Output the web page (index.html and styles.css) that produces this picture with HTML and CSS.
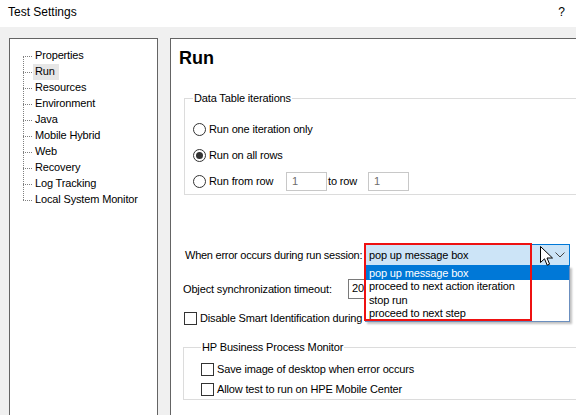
FILE: index.html
```html
<!DOCTYPE html>
<html>
<head>
<meta charset="utf-8">
<link rel="stylesheet" href="styles.css">
</head>
<body>
<div class="titlebar">
  <span class="title">Test Settings</span>
  <span class="help">?</span>
</div>
<div class="main">
  <div class="tree-panel">
    <ul class="tree">
      <li><span>Properties</span></li>
      <li><span class="sel">Run</span></li>
      <li><span>Resources</span></li>
      <li><span>Environment</span></li>
      <li><span>Java</span></li>
      <li><span>Mobile Hybrid</span></li>
      <li><span>Web</span></li>
      <li><span>Recovery</span></li>
      <li><span>Log Tracking</span></li>
      <li><span>Local System Monitor</span></li>
    </ul>
  </div>
  <div class="content-panel">
    <h1 class="heading">Run</h1>
    <fieldset class="group group-iter">
      <legend>Data Table iterations</legend>
      <div class="radio-row"><span class="radio"></span><span>Run one iteration only</span></div>
      <div class="radio-row"><span class="radio checked"></span><span>Run on all rows</span></div>
      <div class="radio-row">
        <span class="radio"></span><span class="from-label">Run from row</span>
        <span class="field">1</span><span class="to-label">to row</span><span class="field">1</span>
      </div>
    </fieldset>

    <div class="error-row">
      <span class="error-label">When error occurs during run session:</span>
      <div class="combo-wrap">
        <div class="combo">
          <span>pop up message box</span>
          <svg class="chev" width="10" height="6" viewBox="0 0 10 6"><path d="M0.5 0.5 L5 5 L9.5 0.5" fill="none" stroke="#444" stroke-width="1"/></svg>
        </div>
        <ul class="droplist">
          <li class="hl">pop up message box</li>
          <li>proceed to next action iteration</li>
          <li>stop run</li>
          <li>proceed to next step</li>
        </ul>
        <div class="redbox"></div>
        <svg class="cursor" width="14" height="21" viewBox="0 0 14 21"><path d="M0.5 0.5 L0.5 16.5 L4.5 12.8 L7.2 19.2 L9.6 18.2 L7 12 L12.5 12 Z" fill="#fff" stroke="#000" stroke-width="1" stroke-linejoin="miter"/></svg>
      </div>
    </div>

    <div class="timeout-row">
      <span class="timeout-label">Object synchronization timeout:</span>
      <span class="field field-timeout">20</span>
    </div>

    <div class="check-row check-smart">
      <span class="check"></span><span>Disable Smart Identification during the run session</span>
    </div>

    <fieldset class="group group-bpm">
      <legend>HP Business Process Monitor</legend>
      <div class="check-row"><span class="check"></span><span>Save image of desktop when error occurs</span></div>
      <div class="check-row"><span class="check"></span><span>Allow test to run on HPE Mobile Center</span></div>
    </fieldset>
  </div>
</div>
</body>
</html>
```

FILE: styles.css
```css
html, body {
  margin: 0;
  padding: 0;
}
body {
  width: 576px;
  height: 415px;
  overflow: hidden;
  background: #f0f0f0;
  font-family: "Liberation Sans", Arial, sans-serif;
  font-size: 11px;
  letter-spacing: -0.15px;
  color: #000;
}
.titlebar {
  height: 27px;
  background: #fff;
  display: flex;
  align-items: center;
  justify-content: space-between;
  padding: 0 11px 3px 8px;
  box-sizing: border-box;
  font-size: 12px;
  letter-spacing: 0;
}
.main {
  display: flex;
  gap: 12px;
  padding: 11px 0 0 9px;
}
.tree-panel {
  width: 147px;
  height: 400px;
  flex: none;
  background: #fff;
  border: 1px solid #646464;
}
.tree {
  position: relative;
  list-style: none;
  margin: 9px 0 0 13px;
  padding: 0;
}
.tree::before {
  content: "";
  position: absolute;
  left: 0;
  top: 8px;
  bottom: 8px;
  border-left: 1px dotted #808080;
}
.tree li {
  height: 16px;
  display: flex;
  align-items: center;
}
.tree li::before {
  content: "";
  width: 9px;
  margin-right: 2px;
  border-top: 1px dotted #808080;
}
.tree li span {
  padding: 1px 1px 2px 1px;
  line-height: 13px;
}
.tree li span.sel {
  background: #e6e6e6;
  margin-left: -1px;
  padding-left: 2px;
  padding-right: 4px;
}
.content-panel {
  width: 430px;
  height: 400px;
  flex: none;
  background: #fff;
  border: 1px solid #646464;
  padding-left: 8px;
  box-sizing: border-box;
}
.heading {
  margin: 8px 0 0 0;
  font-size: 18px;
  font-weight: bold;
  line-height: 22px;
  letter-spacing: 0;
}
.group {
  border: 1px solid #dcdcdc;
  margin: 0;
  padding: 0 0 0 8px;
  min-width: 0;
}
.group legend {
  padding: 0 1px;
  line-height: 14px;
}
.group-iter {
  margin: 22px 0 0 5px;
  height: 104px;
  box-sizing: border-box;
  padding-top: 11px;
  padding-left: 8px;
}
.radio-row {
  height: 26px;
  display: flex;
  align-items: center;
}
.radio {
  width: 13px;
  height: 13px;
  border: 1px solid #333;
  border-radius: 50%;
  box-sizing: border-box;
  margin-right: 3px;
  display: flex;
  align-items: center;
  justify-content: center;
  flex: none;
}
.radio.checked::after {
  content: "";
  width: 7px;
  height: 7px;
  border-radius: 50%;
  background: #333;
}
.from-label {
  width: 77px;
}
.field {
  width: 41px;
  height: 19px;
  border: 1px solid #c8c8c8;
  box-sizing: border-box;
  color: #6d6d6d;
  padding-left: 5px;
  line-height: 17px;
  background: #fff;
}
.to-label {
  width: 40px;
  padding-left: 1px;
}
.error-row {
  display: flex;
  align-items: center;
  margin: 49px 0 0 6px;
  height: 22px;
}
.error-label {
  width: 180px;
  flex: none;
  white-space: nowrap;
  letter-spacing: -0.25px;
}
.combo-wrap {
  position: relative;
  width: 205px;
  height: 22px;
  flex: none;
}
.combo {
  height: 22px;
  box-sizing: border-box;
  border: 1px solid #0078d7;
  background: #cce4f7;
  display: flex;
  align-items: center;
  justify-content: space-between;
  padding: 0 4px 0 3px;
}
.chev {
  display: block;
}
.droplist {
  position: absolute;
  top: 22px;
  left: 0;
  width: 205px;
  box-sizing: border-box;
  margin: 0;
  padding: 0;
  list-style: none;
  background: #fff;
  border: 1px solid #6b8fbf;
  border-top: none;
  box-shadow: 2px 2px 2px rgba(0,0,0,0.25);
  z-index: 2;
}
.droplist li {
  height: 13.6px;
  line-height: 13px;
  padding-left: 3px;
  white-space: nowrap;
}
.droplist li.hl {
  background: #0078d7;
  color: #fff;
  height: 14px;
  line-height: 14px;
}
.redbox {
  position: absolute;
  left: -1px;
  top: -1px;
  width: 168px;
  height: 78px;
  border: 2px solid #ee1111;
  box-sizing: border-box;
  z-index: 3;
}
.cursor {
  position: absolute;
  left: 175px;
  top: 2px;
  z-index: 4;
}
.timeout-row {
  display: flex;
  align-items: center;
  margin: 13px 0 0 4px;
  height: 20px;
}
.timeout-label {
  width: 165px;
  flex: none;
  white-space: nowrap;
}
.field-timeout {
  width: 30px;
  height: 20px;
  color: #000;
  border-color: #7a7a7a;
  padding-left: 3px;
}
.check-row {
  display: flex;
  align-items: center;
  height: 20px;
  white-space: nowrap;
}
.check {
  width: 13px;
  height: 13px;
  border: 1px solid #333;
  box-sizing: border-box;
  background: #fff;
  margin-right: 3px;
  flex: none;
}
.check-smart {
  margin: 9px 0 0 5px;
}
.group-bpm {
  margin: 12px 0 0 4px;
  height: 60px;
  box-sizing: border-box;
  padding-left: 17px;
  padding-top: 5px;
}
```
